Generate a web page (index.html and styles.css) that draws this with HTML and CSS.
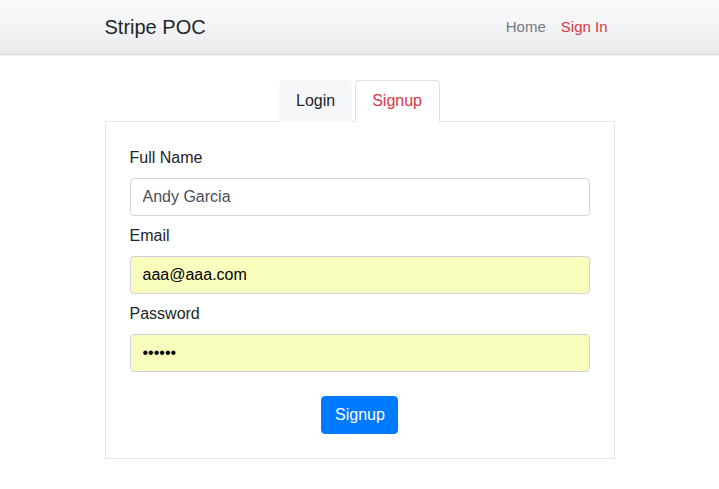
FILE: index.html
```html
<!DOCTYPE html>
<html>
<head>
<meta charset="utf-8">
<link rel="stylesheet" href="styles.css">
</head>
<body>
<nav class="navbar">
  <div class="container nav-inner">
    <a class="brand">Stripe POC</a>
    <ul class="nav-links">
      <li><a class="nav-link">Home</a></li>
      <li><a class="nav-link active">Sign In</a></li>
    </ul>
  </div>
</nav>
<main class="container">
  <ul class="tabs">
    <li><a class="tab">Login</a></li>
    <li><a class="tab tab-active">Signup</a></li>
  </ul>
  <div class="panel">
    <div class="form-group">
      <label class="label">Full Name</label>
      <input class="input" type="text" value="Andy Garcia">
    </div>
    <div class="form-group">
      <label class="label">Email</label>
      <input class="input autofill" type="text" value="aaa@aaa.com">
    </div>
    <div class="form-group">
      <label class="label">Password</label>
      <input class="input autofill" type="password" value="secret">
    </div>
    <div class="actions">
      <button class="btn">Signup</button>
    </div>
  </div>
</main>
</body>
</html>
```
FILE: styles.css
```css
* { box-sizing: border-box; }
html, body { margin: 0; padding: 0; }
body {
  font-family: "Liberation Sans", Arial, sans-serif;
  font-size: 16px;
  line-height: 1.5;
  color: #212529;
  background: #fff;
}
.container {
  width: 540px;
  margin: 0 auto;
  padding: 0 15px;
}
.navbar {
  height: 55px;
  background: linear-gradient(to bottom, #f9fafb 0%, #f3f4f6 50%, #e8e9eb 100%);
  border-bottom: 1px solid #dcdee0;
  box-shadow: 0 1px 0 #f1f2f3;
}
.nav-inner {
  height: 54px;
  display: flex;
  align-items: center;
  justify-content: space-between;
}
.brand {
  font-size: 20px;
  line-height: 30px;
  color: #212529;
}
.nav-links {
  list-style: none;
  margin: 0;
  padding: 0;
  display: flex;
}
.nav-link {
  display: block;
  padding: 8px 7px 8px 8px;
  font-size: 15px;
  color: #777b80;
}
.nav-link.active { color: #dc3545; }
.tabs {
  list-style: none;
  margin: 25px 0 0;
  padding: 0;
  display: flex;
  justify-content: center;
  gap: 3px;
}
.tab {
  display: block;
  padding: 8px 16px;
  border: 1px solid transparent;
  border-top-left-radius: 4px;
  border-top-right-radius: 4px;
  margin-bottom: -1px;
  background: #f7f8f9;
  color: #212529;
  position: relative;
}
.tab-active {
  background: #fff;
  border-color: #dee2e6 #dee2e6 #fff;
  color: #dc3545;
  padding-right: 17px;
}
.panel {
  border: 1px solid #e3e5e7;
  padding: 24px;
}
.form-group { margin-bottom: 8px; }
.label {
  display: block;
  margin-bottom: 8px;
}
.input {
  display: block;
  width: 100%;
  height: 38px;
  padding: 6px 12px;
  font-family: inherit;
  font-size: 16px;
  line-height: 1.5;
  color: #495057;
  background: #fff;
  border: 1px solid #ced4da;
  border-radius: 4px;
}
.input.autofill {
  background: #fafebd;
  color: #000;
}
.actions {
  display: flex;
  justify-content: center;
  padding-top: 16px;
}
.btn {
  font-family: inherit;
  font-size: 16px;
  line-height: 24px;
  padding: 6px 12px 6px 13px;
  color: #fff;
  background: #007bff;
  border: 1px solid #007bff;
  border-radius: 4px;
}
```
